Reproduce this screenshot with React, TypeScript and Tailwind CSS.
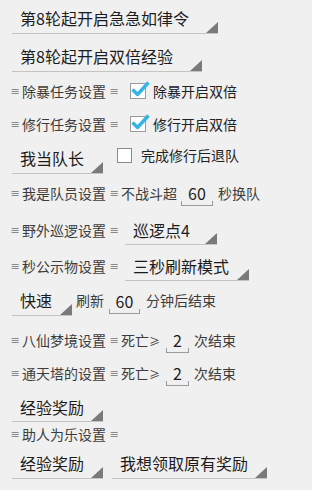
import React from 'react';

const Tri: React.FC = () => (
  <svg className="absolute right-0 bottom-0" width="12" height="11" viewBox="0 0 12 11">
    <polygon points="12,0 12,11 0,11" fill="#7a7a7a" />
  </svg>
);

interface SpinnerProps {
  text: string;
  w: string;
  h?: string;
}

const Spinner: React.FC<SpinnerProps> = ({ text, w, h = 'h-[31px]' }) => (
  <div className={`relative flex items-center ${w} ${h} border-b border-[#c4c4c4] pl-2 text-[16px] text-[#1c1c1c] shrink-0`}>
    <span className="leading-none">{text}</span>
    <Tri />
  </div>
);

const Eq: React.FC = () => (
  <span className="flex justify-center w-[6px] overflow-visible text-[11px] leading-none text-[#8a8a8a] font-['DejaVu_Sans',sans-serif] pt-[1px]">≡</span>
);

const Label: React.FC<{ text: string }> = ({ text }) => (
  <span className="flex items-center text-[14px] text-[#3c3c3c] shrink-0">
    <span className="ml-[2px] mr-[4px]"><Eq /></span>
    <span>{text}</span>
    <span className="ml-[5px]"><Eq /></span>
  </span>
);

const Field: React.FC<{ value: string; w: string }> = ({ value, w }) => (
  <span className={`relative flex justify-center ${w} text-[16px] text-[#1c1c1c] shrink-0 leading-none`}>
    {value}
    <span className="absolute left-0 right-0 -bottom-[5px] h-[5px] border-x border-b border-[#9a9a9a]" />
  </span>
);

const Checked: React.FC = () => (
  <div className="relative w-[16px] h-[16px] border border-[#9a9a9a] bg-white shrink-0">
    <svg className="absolute -left-[1px] -top-[5px]" width="20" height="20" viewBox="0 0 20 20">
      <path d="M2.5 10.5 L7.5 15.5 L18.5 3.5" stroke="#33b5e5" strokeWidth="3.4" fill="none" strokeLinejoin="round" />
    </svg>
  </div>
);

export default function App() {
  return (
    <div className="w-[312px] h-[490px] overflow-hidden bg-[#f0f0f0] font-['Noto_Sans_CJK_SC',sans-serif] flex flex-col">
      <div className="pl-3 mt-[3px]">
        <Spinner text="第8轮起开启急急如律令" w="w-[206px]" />
      </div>
      <div className="pl-3 mt-[7px]">
        <Spinner text="第8轮起开启双倍经验" w="w-[190px]" />
      </div>

      <div className="flex items-center h-[34px] mt-[2px] pl-[10px]">
        <Label text="除暴任务设置" />
        <div className="ml-[13px]"><Checked /></div>
        <span className="ml-[7px] text-[14px] text-[#222]">除暴开启双倍</span>
      </div>
      <div className="flex items-center h-[32px] pl-[10px]">
        <Label text="修行任务设置" />
        <div className="ml-[13px]"><Checked /></div>
        <span className="ml-[7px] text-[14px] text-[#222]">修行开启双倍</span>
      </div>

      <div className="flex items-end mt-[3px] pl-3">
        <Spinner text="我当队长" w="w-[91px]" />
        <div className="flex items-center h-[31px] pb-[6px] ml-[14px]">
          <div className="w-[15px] h-[15px] border border-[#8a8a8a] bg-white" />
          <span className="ml-[9px] text-[14px] text-[#222]">完成修行后退队</span>
        </div>
      </div>

      <div className="flex items-center h-[34px] mt-[2px] pl-[10px] text-[14px] text-[#3c3c3c]">
        <Label text="我是队员设置" />
        <span className="ml-[4px]">不战斗超</span>
        <span className="ml-[4px]"><Field value="60" w="w-[32px]" /></span>
        <span className="ml-[5px]">秒换队</span>
      </div>

      <div className="flex items-center mt-[5px] pl-[10px]">
        <Label text="野外巡逻设置" />
        <div className="ml-[8px]"><Spinner text="巡逻点4" w="w-[92px]" h="h-[30px]" /></div>
      </div>
      <div className="flex items-center mt-[6px] pl-[10px]">
        <Label text="秒公示物设置" />
        <div className="ml-[8px]"><Spinner text="三秒刷新模式" w="w-[124px]" h="h-[30px]" /></div>
      </div>

      <div className="flex items-center mt-[4px] pl-3 text-[14px] text-[#3c3c3c]">
        <Spinner text="快速" w="w-[60px]" />
        <span className="ml-[4px]">刷新</span>
        <span className="ml-[5px]"><Field value="60" w="w-[31px]" /></span>
        <span className="ml-[6px]">分钟后结束</span>
      </div>

      <div className="flex items-center h-[34px] mt-[7px] pl-[10px] text-[14px] text-[#3c3c3c]">
        <Label text="八仙梦境设置" />
        <span className="ml-[4px]">死亡<span className="text-[11px]">≥</span></span>
        <span className="ml-[6px]"><Field value="2" w="w-[23px]" /></span>
        <span className="ml-[5px]">次结束</span>
      </div>
      <div className="flex items-center h-[32px] pl-[10px] text-[14px] text-[#3c3c3c]">
        <Label text="通天塔的设置" />
        <span className="ml-[4px]">死亡<span className="text-[11px]">≥</span></span>
        <span className="ml-[6px]"><Field value="2" w="w-[23px]" /></span>
        <span className="ml-[5px]">次结束</span>
      </div>

      <div className="pl-3 mt-[3px]">
        <Spinner text="经验奖励" w="w-[91px]" h="h-[30px]" />
      </div>
      <div className="flex items-center h-[20px] mt-[2px] pl-[10px]">
        <Label text="助人为乐设置" />
      </div>
      <div className="flex items-center mt-[4px] pl-3">
        <Spinner text="经验奖励" w="w-[91px]" />
        <div className="ml-[9px]"><Spinner text="我想领取原有奖励" w="w-[155px]" /></div>
      </div>
    </div>
  );
}
